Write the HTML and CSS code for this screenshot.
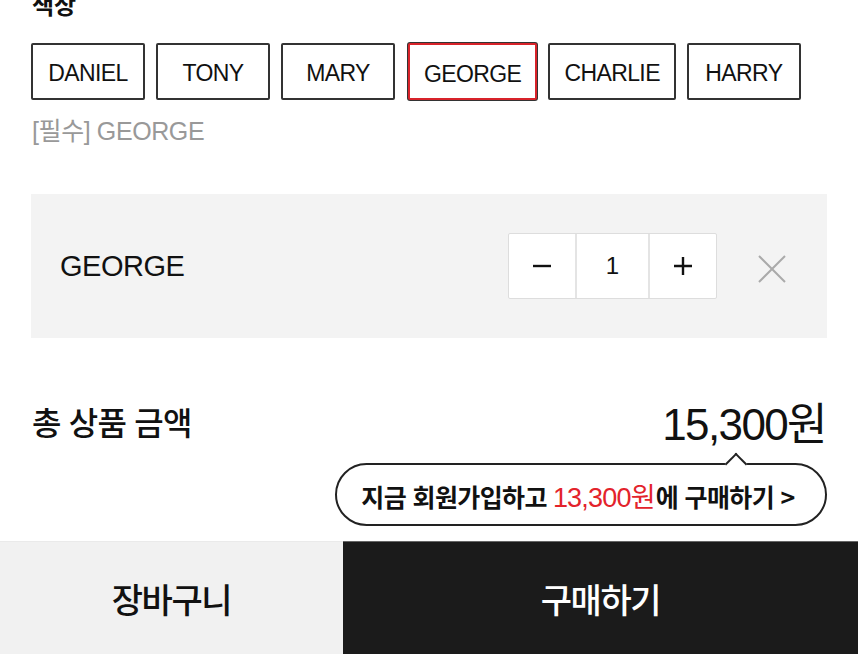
FILE: index.html
```html
<!DOCTYPE html>
<html lang="ko">
<head>
<meta charset="utf-8">
<link rel="stylesheet" href="styles.css">
</head>
<body>
<div class="page">
  <section class="content">
    <h2 class="label">색상</h2>
    <div class="options">
      <button class="opt">DANIEL</button>
      <button class="opt">TONY</button>
      <button class="opt">MARY</button>
      <button class="opt opt-on">GEORGE</button>
      <button class="opt">CHARLIE</button>
      <button class="opt">HARRY</button>
    </div>
    <p class="picked">[필수] GEORGE</p>
    <div class="item">
      <span class="item-name">GEORGE</span>
      <div class="item-right">
        <div class="qty">
          <span class="qcell qbtn">
            <svg width="22" height="22" viewBox="0 0 22 22"><path d="M2 11h18" stroke="#111" stroke-width="2.4"/></svg>
          </span>
          <span class="qcell qnum">1</span>
          <span class="qcell qbtn">
            <svg width="22" height="22" viewBox="0 0 22 22"><path d="M2 11h18M11 2v18" stroke="#111" stroke-width="2.4"/></svg>
          </span>
        </div>
        <svg class="del" width="30" height="30" viewBox="0 0 30 30"><path d="M2 2l26 26M28 2L2 28" stroke="#aaa" stroke-width="2"/></svg>
      </div>
    </div>
    <div class="total">
      <span class="total-label">총 상품 금액</span>
      <span class="total-price">15,300원</span>
    </div>
    <div class="tip-row">
      <div class="tip">지금 회원가입하고 <span class="red">13,300원</span>에 구매하기 &gt;</div>
    </div>
  </section>
  <footer class="bar">
    <button class="cart">장바구니</button>
    <button class="buy">구매하기</button>
  </footer>
</div>
</body>
</html>
```

FILE: styles.css
```css
* { box-sizing: border-box; }
html, body { margin: 0; padding: 0; }
body {
  width: 858px;
  height: 654px;
  overflow: hidden;
  background: #fff;
  font-family: "Liberation Sans", "Noto Sans CJK KR", sans-serif;
  color: #111;
}
.page {
  height: 654px;
  display: flex;
  flex-direction: column;
  justify-content: space-between;
}
.content {
  padding: 0 31px;
  margin-top: -9px;
}
.label {
  margin: 0;
  font-family: "Noto Sans CJK KR", sans-serif;
  font-size: 24px;
  line-height: 26px;
  font-weight: 700;
  padding-left: 1px;
}
.options {
  margin-top: 26px;
  display: flex;
  gap: 11px;
}
.opt {
  height: 57px;
  min-width: 114px;
  padding: 3px 14px 0;
  background: #fff;
  border: 2px solid #333;
  border-radius: 2px;
  font-family: "Liberation Sans", sans-serif;
  font-size: 23px;
  color: #111;
  letter-spacing: -0.6px;
}
.opt-on {
  border-color: #d8232a;
  box-shadow: 0 0 0 1px #333;
  padding-top: 5px;
  margin-left: 2px;
}
.picked {
  margin: 15px 0 0;
  font-size: 25px;
  line-height: 32px;
  color: #999;
  letter-spacing: -0.4px;
  padding-left: 1px;
}
.item {
  margin-top: 47px;
  height: 144px;
  background: #f3f3f3;
  display: flex;
  align-items: center;
  justify-content: space-between;
  padding: 0 40px 0 29px;
}
.item-name {
  font-size: 29px;
  letter-spacing: -0.5px;
}
.item-right {
  display: flex;
  align-items: center;
  gap: 40px;
}
.qty {
  display: flex;
  height: 66px;
  border: 1px solid #ddd;
  border-radius: 2px;
  background: #fff;
}
.qcell {
  display: flex;
  align-items: center;
  justify-content: center;
  height: 100%;
}
.qbtn { width: 66px; }
.qnum {
  width: 75px;
  border-left: 2px solid #e4e4e4;
  border-right: 2px solid #e4e4e4;
  font-size: 24px;
}
.del { margin-top: 6px; }
.total {
  margin-top: 53px;
  display: flex;
  justify-content: space-between;
  align-items: center;
  height: 60px;
}
.total-label {
  font-family: "Noto Sans CJK KR", sans-serif;
  font-size: 32px;
  font-weight: 500;
  padding-left: 1px;
  letter-spacing: -0.8px;
}
.total-price {
  font-size: 44px;
  letter-spacing: -1.6px;
  margin-right: 1px;
}
.tip-row {
  display: flex;
  justify-content: flex-end;
  margin-top: 12px;
}
.tip {
  position: relative;
  height: 63px;
  width: 492px;
  border: 2px solid #222;
  border-radius: 32px;
  display: flex;
  align-items: center;
  justify-content: center;
  font-family: "Noto Sans CJK KR", sans-serif;
  font-size: 25px;
  font-weight: 700;
  letter-spacing: -0.6px;
  padding: 2px 6px 0 0;
}
.tip::before {
  content: "";
  position: absolute;
  top: -9px;
  right: 81px;
  width: 14px;
  height: 14px;
  background: #fff;
  border-left: 2px solid #222;
  border-top: 2px solid #222;
  transform: rotate(45deg);
}
.red {
  color: #e3232b;
  font-family: "Liberation Sans", "Noto Sans CJK KR", sans-serif;
  font-weight: 400;
  font-size: 27px;
  letter-spacing: -0.8px;
  margin: 0 1px 0 6px;
}
.bar {
  display: flex;
  height: 113px;
}
.bar button {
  border: 0;
  font-family: "Noto Sans CJK KR", sans-serif;
  font-size: 34px;
  font-weight: 500;
  letter-spacing: -1.4px;
}
.cart {
  width: 343px;
  background: #f1f1f1;
  color: #111;
  border-top: 1px solid #eaeaea !important;
}
.buy {
  flex: 1;
  background: #1b1b1b;
  color: #fff;
  border-top: 1px solid #666 !important;
}
```
